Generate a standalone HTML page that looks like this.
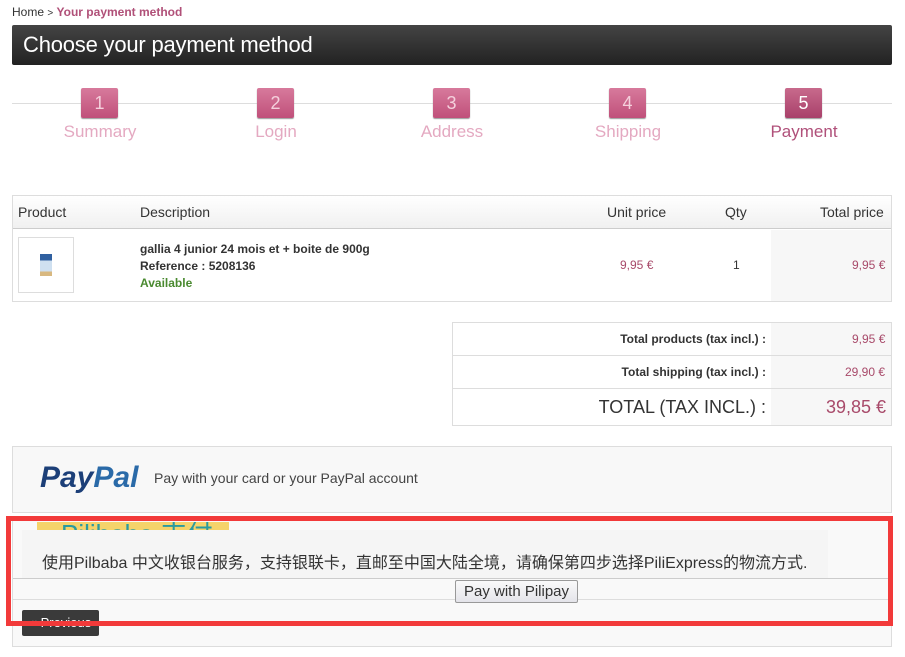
<!DOCTYPE html>
<html><head><meta charset="utf-8"><style>
*{margin:0;padding:0;box-sizing:border-box}
body{width:905px;height:657px;background:#fff;font-family:"Liberation Sans",Arial,sans-serif;position:relative;overflow:hidden;color:#333}
.a{position:absolute}
.box{position:absolute;width:37px;height:30px;top:88px;border-radius:2px;background:linear-gradient(#d77a9c,#c0507a);color:#f4d0dc;font-size:18px;text-align:center;line-height:30px;box-shadow:0 1px 1px #999}
.lbl{position:absolute;top:122px;font-size:17px;color:#e4a9c1;width:176px;text-align:center}
.pr{color:#a84a6a;font-size:12px}
</style></head><body>
<div class="a" style="left:12px;top:5px;font-size:12px;color:#333">Home <span style="font-size:10px">&gt;</span> <b style="color:#b05078">Your payment method</b></div>
<div class="a" style="left:12px;top:25px;width:880px;height:40px;background:linear-gradient(#444,#222);border-radius:2px;color:#fff;font-size:22px;padding:7px 11px;letter-spacing:-0.2px">Choose your payment method</div>

<div class="a" style="left:12px;top:103px;width:880px;height:1px;background:#ddd"></div>
<div class="box" style="left:81px">1</div>
<div class="box" style="left:257px">2</div>
<div class="box" style="left:433px">3</div>
<div class="box" style="left:609px">4</div>
<div class="box" style="left:785px;color:#fff;background:linear-gradient(#c86a8c,#a8406a)">5</div>
<div class="lbl" style="left:12px">Summary</div>
<div class="lbl" style="left:188px">Login</div>
<div class="lbl" style="left:364px">Address</div>
<div class="lbl" style="left:540px">Shipping</div>
<div class="lbl" style="left:716px;color:#b0507a">Payment</div>

<div class="a" style="left:12px;top:195px;width:880px;height:107px;border:1px solid #ddd"></div>
<div class="a" style="left:13px;top:196px;width:878px;height:33px;background:linear-gradient(#fff,#f0f0f0);border-bottom:1px solid #ccc"></div>
<div class="a" style="left:771px;top:230px;width:120px;height:71px;background:#f7f7f7"></div>
<div class="a" style="left:18px;top:204px;font-size:14px">Product</div>
<div class="a" style="left:140px;top:204px;font-size:14px">Description</div>
<div class="a" style="left:607px;top:204px;font-size:14px">Unit price</div>
<div class="a" style="left:725px;top:204px;font-size:14px">Qty</div>
<div class="a" style="left:820px;top:204px;font-size:14px">Total price</div>
<div class="a" style="left:18px;top:237px;width:56px;height:56px;border:1px solid #ddd;background:#fff"><div class="a" style="left:21px;top:16px;width:12px;height:22px;background:linear-gradient(#3060a0 30%,#cfe0f0 30%,#cfe0f0 80%,#d8b880 80%)"></div></div>
<div class="a" style="left:140px;top:241px;font-size:12px;font-weight:bold;line-height:17px">gallia 4 junior 24 mois et + boite de 900g<br>Reference : 5208136<br><span style="color:#4a8a30">Available</span></div>
<div class="a pr" style="left:620px;top:258px">9,95 €</div>
<div class="a" style="left:733px;top:258px;font-size:12px">1</div>
<div class="a pr" style="left:852px;top:258px">9,95 €</div>

<div class="a" style="left:452px;top:322px;width:440px;height:104px;border:1px solid #ddd"></div>
<div class="a" style="left:771px;top:323px;width:120px;height:102px;background:#f7f7f7"></div>
<div class="a" style="left:453px;top:355px;width:438px;height:1px;background:#ddd"></div>
<div class="a" style="left:453px;top:388px;width:438px;height:1px;background:#ddd"></div>
<div class="a" style="left:560px;top:332px;width:206px;text-align:right;font-size:12px;font-weight:bold">Total products (tax incl.) :</div>
<div class="a pr" style="left:852px;top:332px">9,95 €</div>
<div class="a" style="left:560px;top:365px;width:206px;text-align:right;font-size:12px;font-weight:bold">Total shipping (tax incl.) :</div>
<div class="a pr" style="left:845px;top:365px">29,90 €</div>
<div class="a" style="left:560px;top:397px;width:206px;text-align:right;font-size:18px">TOTAL (TAX INCL.) :</div>
<div class="a" style="left:826px;top:397px;font-size:18px;color:#a84a6a">39,85 €</div>

<div class="a" style="left:12px;top:446px;width:880px;height:67px;border:1px solid #ddd;background:#f8f8f8"></div>
<div class="a" style="left:40px;top:461px;font-size:30px;font-weight:bold;font-style:italic;color:#1c3f78;letter-spacing:0px">Pay<span style="color:#2a6aa8">Pal</span></div>
<div class="a" style="left:154px;top:470px;font-size:14px;color:#444">Pay with your card or your PayPal account</div>

<div class="a" style="left:12px;top:520px;width:880px;height:127px;border:1px solid #ddd;background:#f9f9f9"></div>
<div class="a" style="left:37px;top:522px;width:192px;height:8px;background:#f5d36a;overflow:hidden"><span style="position:absolute;left:24px;top:-3px;font-size:26px;line-height:30px;color:#2a9aa0;font-family:'Liberation Sans','Noto Sans CJK SC',sans-serif">Pilibaba 支付</span></div>
<div class="a" style="left:22px;top:530px;width:806px;height:48px;background:#f5f5f5"></div>
<div class="a" style="left:42px;top:549px;font-size:16px;color:#333;font-family:'Liberation Sans','Noto Sans CJK SC',sans-serif">使用Pilbaba 中文收银台服务，支持银联卡，直邮至中国大陆全境，请确保第四步选择PiliExpress的物流方式.</div>
<div class="a" style="left:13px;top:578px;width:878px;height:1px;background:#ccc"></div>
<div class="a" style="left:13px;top:599px;width:878px;height:1px;background:#ddd"></div>
<div class="a" style="left:455px;top:580px;width:123px;height:23px;border:1px solid #999;border-radius:2px;background:linear-gradient(#fafafa,#e4e4ea);font-size:15px;text-align:center;line-height:21px;color:#333">Pay with Pilipay</div>
<div class="a" style="left:22px;top:610px;width:77px;height:26px;background:#3a3a3a;border-radius:2px;color:#fff;font-size:13px;text-align:center;line-height:26px">« Previous</div>
<div class="a" style="left:6px;top:516px;width:887px;height:110px;border:5px solid #f23a3a"></div>
</body></html>
